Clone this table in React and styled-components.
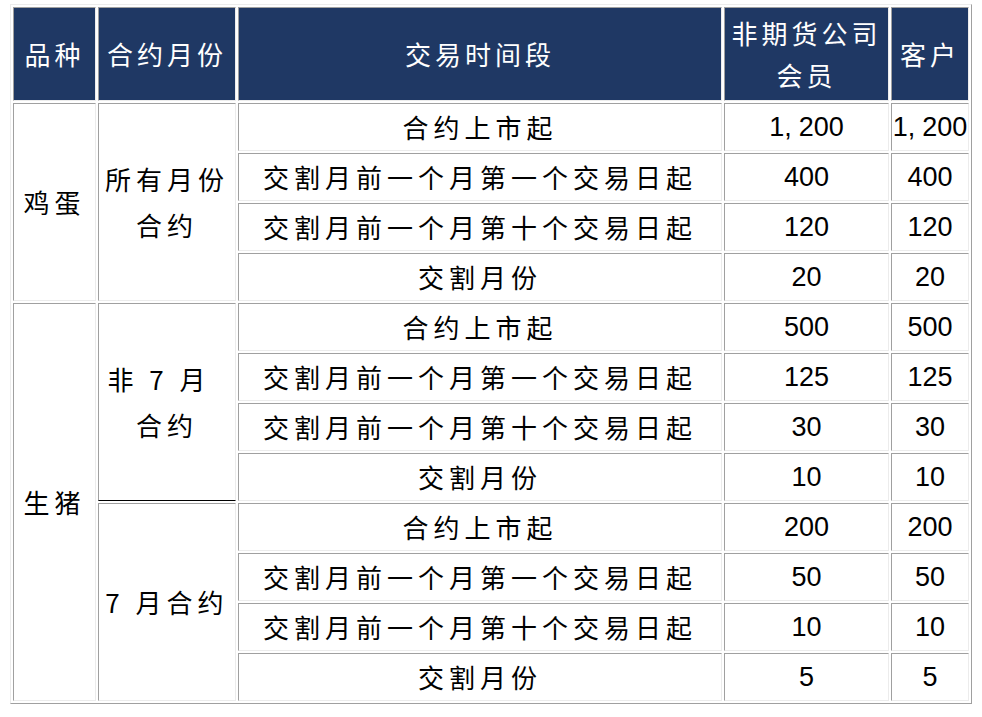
import React from 'react';
import styled, { createGlobalStyle } from 'styled-components';

const GlobalStyle = createGlobalStyle`
  html, body {
    margin: 0;
    padding: 0;
    background: #ffffff;
  }
  body {
    font-family: "Noto Sans CJK SC", "Liberation Sans", sans-serif;
  }
`;

const Page = styled.div`
  padding: 4px 10px 0 10px;
  width: 982px;
  box-sizing: border-box;
`;

const Table = styled.table`
  width: 962px;
  table-layout: fixed;
  border-collapse: separate;
  border-spacing: 2px;
  border-style: solid;
  border-width: 1px;
  border-color: #ececec #a0a0a0 #a0a0a0 #ececec;
`;

const HeadCell = styled.th`
  height: 92px;
  padding: 0;
  background: #1f3864;
  color: #ffffff;
  font-weight: 400;
  font-size: 26px;
  line-height: 42px;
  letter-spacing: 4px;
  text-align: center;
  vertical-align: middle;
  border-style: solid;
  border-width: 1px;
  border-color: #a0a0a0 #ececec #ececec #a0a0a0;
`;

const Cell = styled.td`
  height: 46px;
  padding: 0;
  color: #000000;
  font-size: 26px;
  line-height: 44px;
  letter-spacing: 5px;
  text-align: center;
  vertical-align: middle;
  border-style: solid;
  border-width: 1px;
  border-color: #a0a0a0 #ececec #ececec #a0a0a0;
  ${(p) => p.$split && 'border-bottom-color: #000000;'}
`;

const GroupCell = styled(Cell)`
  line-height: 46px;
`;

const NumCell = styled(Cell)`
  font-family: "Liberation Sans", Arial, sans-serif;
  font-size: 27px;
  letter-spacing: 0;
`;

const Comma = styled.span`
  margin-right: 7px;
`;

const ShiftedLine = styled.span`
  display: inline-block;
  margin-right: ${(p) => p.$shift || 0}px;
`;

const Num = ({ value }) => {
  if (value.includes(',')) {
    const [a, b] = value.split(',');
    return (
      <>
        {a}
        <Comma>,</Comma>
        {b}
      </>
    );
  }
  return value;
};

const periods = [
  '合约上市起',
  '交割月前一个月第一个交易日起',
  '交割月前一个月第十个交易日起',
  '交割月份',
];

const groups = [
  { product: '鸡蛋', label: ['所有月份', '合约'], values: ['1,200', '400', '120', '20'] },
  { product: '生猪', label: ['非 7 月', '合约'], shift: 16, values: ['500', '125', '30', '10'], split: true },
  { label: ['7 月合约'], values: ['200', '50', '10', '5'] },
];

const productSpan = { 鸡蛋: 4, 生猪: 8 };

export default function App() {
  return (
    <Page>
      <GlobalStyle />
      <Table>
        <colgroup>
          <col style={{ width: 83 }} />
          <col style={{ width: 138 }} />
          <col style={{ width: 484 }} />
          <col style={{ width: 165 }} />
          <col style={{ width: 78 }} />
        </colgroup>
        <thead>
          <tr>
            <HeadCell>品种</HeadCell>
            <HeadCell>合约月份</HeadCell>
            <HeadCell>交易时间段</HeadCell>
            <HeadCell>
              非期货公司
              <br />
              会员
            </HeadCell>
            <HeadCell>客户</HeadCell>
          </tr>
        </thead>
        <tbody>
          {groups.map((g, gi) =>
            periods.map((period, pi) => (
              <tr key={`${gi}-${pi}`}>
                {pi === 0 && g.product && (
                  <Cell rowSpan={productSpan[g.product]}>{g.product}</Cell>
                )}
                {pi === 0 && (
                  <GroupCell rowSpan={4} $split={g.split}>
                    {g.label.map((line, li) => (
                      <React.Fragment key={li}>
                        {li > 0 && <br />}
                        {li === 0 && g.shift ? (
                          <ShiftedLine $shift={g.shift}>{line}</ShiftedLine>
                        ) : (
                          line
                        )}
                      </React.Fragment>
                    ))}
                  </GroupCell>
                )}
                <Cell>{period}</Cell>
                <NumCell>
                  <Num value={g.values[pi]} />
                </NumCell>
                <NumCell>
                  <Num value={g.values[pi]} />
                </NumCell>
              </tr>
            ))
          )}
        </tbody>
      </Table>
    </Page>
  );
}
